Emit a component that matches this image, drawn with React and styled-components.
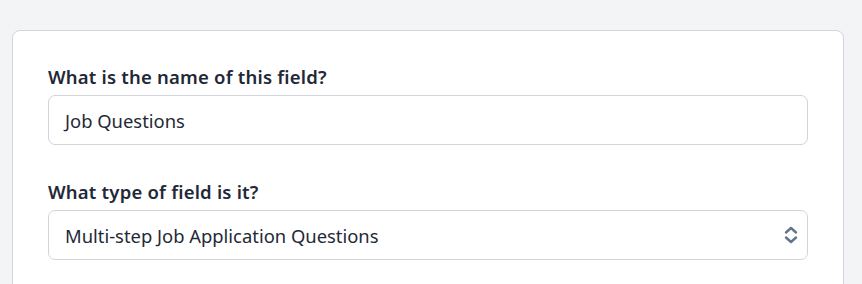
import React from "react";
import styled, { createGlobalStyle } from "styled-components";

const Global = createGlobalStyle`
  html, body { margin: 0; padding: 0; background: #f3f4f6; }
  body { font-family: "Noto Sans", "Open Sans", sans-serif; -webkit-font-smoothing: antialiased; }
  * { box-sizing: border-box; }
`;

const Page = styled.div`
  padding: 30px 18px 0 12px;
  height: 284px;
  overflow: hidden;
`;

const Card = styled.div`
  background: #ffffff;
  border: 1px solid #d1d5db;
  border-radius: 8px;
  padding: 32px 35px 60px 35px;
  display: flex;
  flex-direction: column;
  gap: 33px;
`;

const Field = styled.div`
  display: flex;
  flex-direction: column;
  gap: 5px;
`;

const Label = styled.label`
  font-size: 18.5px;
  line-height: 27px;
  font-weight: 600;
  letter-spacing: 0.2px;
  color: #1f2937;
`;

const Box = styled.div`
  position: relative;
  height: 50px;
  border: 1px solid #d1d5db;
  border-radius: 7px;
  background: #fff;
  display: flex;
  align-items: center;
  padding: 0 40px 0 16px;
  font-size: 18.4px;
  color: #1f2937;
`;

const Chevrons = styled.svg`
  position: absolute;
  right: 8px;
  top: 50%;
  transform: translateY(-50%);
  width: 16px;
  height: 20px;
  color: #64748b;
`;

export default function App() {
  return (
    <>
      <Global />
      <Page>
        <Card>
          <Field>
            <Label>What is the name of this field?</Label>
            <Box>Job Questions</Box>
          </Field>
          <Field>
            <Label>What type of field is it?</Label>
            <Box>
              Multi-step Job Application Questions
              <Chevrons viewBox="0 0 16 20" fill="none" stroke="currentColor" strokeWidth="2.4" strokeLinecap="round" strokeLinejoin="round">
                <path d="M3 7.5L8 3L13 7.5" />
                <path d="M3 12.5L8 17L13 12.5" />
              </Chevrons>
            </Box>
          </Field>
        </Card>
      </Page>
    </>
  );
}
